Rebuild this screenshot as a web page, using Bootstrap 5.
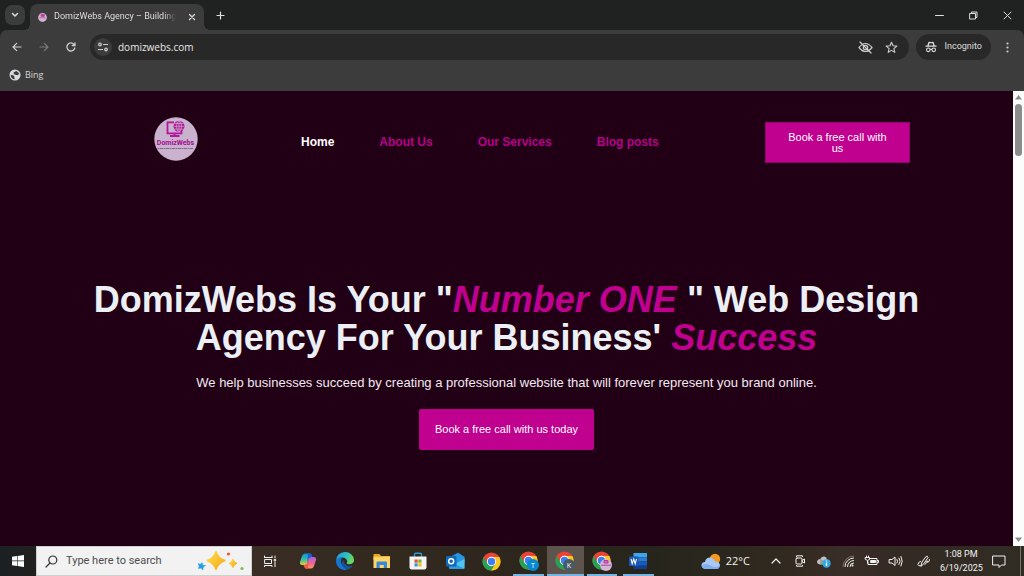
<!DOCTYPE html>
<html lang="en">
<head>
<meta charset="utf-8">
<meta name="viewport" content="width=device-width, initial-scale=1">
<title>DomizWebs Agency – Building</title>
<link rel="stylesheet" href="https://cdn.jsdelivr.net/npm/bootstrap@5.3.0/dist/css/bootstrap.min.css">
<style>
:root { --strip: #202222; --bar: #3c3c3c; --field: #282828; --plum: #210016; --pink: #c0008e; }
body { font-family: "Open Sans", "Noto Sans", sans-serif; background: var(--strip); color: #dedede; overflow: hidden; }
svg { display: block; flex: none; }
button { color: inherit; }
.plain-btn { border: 0; padding: 0; background: none; display: flex; align-items: center; justify-content: center; }
.stroke { fill: none; stroke: currentColor; stroke-linecap: round; stroke-linejoin: round; }

/* Browser frame */
.tab-strip { height: 30px; padding-left: 5px; }
.tab-search { width: 20px; height: 20px; border-radius: 7px; background: var(--bar); margin: 5px 5px 0 0; }
.browser-tab { position: relative; width: 174px; height: 26px; margin-top: 4px; padding: 0 8px; background: var(--bar); border-radius: 8px 8px 0 0; font-family: Roboto, sans-serif; font-size: 9px; }
.browser-tab::before, .browser-tab::after { content: ""; position: absolute; bottom: 0; width: 6px; height: 6px; }
.browser-tab::before { left: -6px; background: radial-gradient(circle at 0 0, transparent 6px, var(--bar) 6px); }
.browser-tab::after { right: -6px; background: radial-gradient(circle at 100% 0, transparent 6px, var(--bar) 6px); }
.tab-title { flex: 1; min-width: 0; overflow: hidden; white-space: nowrap; margin-left: 7px; -webkit-mask-image: linear-gradient(90deg, #000 90%, transparent); mask-image: linear-gradient(90deg, #000 90%, transparent); }
.window-controls .plain-btn { width: 34px; height: 30px; }
.tool-bar { height: 34px; background: var(--bar); border-radius: 7px 7px 0 0; padding: 0 3px; }
.tool-bar .plain-btn { color: #cfcfcf; }
.tool-bar .plain-btn.faded { color: #7b7b7b; }
.tool-bar .nav-btn { width: 27px; height: 26px; }
.omnibox { height: 26px; border-radius: 13px; background: var(--field); padding: 0 11px 0 4px; margin-left: 6px; }
.site-info { width: 18px; height: 18px; border-radius: 50%; background: var(--bar); }
.omnibox input { border: 0; outline: 0; background: none; color: #e8e8e8; font-size: 10px; padding: 0 0 0 6px; min-width: 0; }
.incognito { height: 26px; border-radius: 13px; background: var(--field); padding: 0 9px; margin: 0 3px 0 7px; font-family: Roboto, sans-serif; font-size: 9px; }
.bookmark-bar { height: 27px; background: var(--bar); padding: 0 9px 5px; font-size: 9px; }
.bookmark-bar a { color: #d5d5d5; }

/* Website */
.viewport { min-height: 0; background: var(--plum); font-family: "Liberation Sans", Arial, sans-serif; }
.site-wrap { max-width: 855px; }
.site-head { display: grid; grid-template-columns: 193px 1fr 145px; padding: 26px 24px 0 0; align-items: start; }
.site-links { gap: 45px; padding: 16px 0 0 29px; font-size: 12px; font-weight: 700; }
.site-links a { color: #b8008a; text-decoration: none; }
.site-links a.active { color: #fff; }
.cta { background: var(--pink); border: 0; color: #fff; text-decoration: none; text-align: center; font-size: 11px; line-height: 11px; }
.cta-head { padding: 9px 18px 8px; margin-top: 5px; border: 1px solid #960071; }
.cta-hero { padding: 15px 16px; border-radius: 2px; }
.hero { padding-top: 118px; text-align: center; }
.hero h1 { font-size: 36px; line-height: 38px; font-weight: 700; color: #eceff3; margin: 0 0 16px; }
.hero em { color: var(--pink); }
.hero p { font-size: 13px; line-height: 20px; color: #f2e9ef; margin: 0 0 16px; }
.scroll-rail { width: 11px; background: #fcfcfc; padding: 4px 0; }
.scroll-thumb { width: 7px; height: 52px; margin-top: 4px; border-radius: 4px; background: #8b8b8b; }

/* Taskbar */
.task-bar { height: 30px; background: linear-gradient(90deg, #1b2023 0, #20211f 3%, #3a2d25 25%, #33291f 36%, #2d261d 52%, #26251c 64%, #30291f 76%, #392d27 82%, #332a23 88%, #302c24 100%); color: #f3f3f3; }
.start-btn { width: 36px; height: 30px; }
.search-box { width: 216px; height: 30px; background: #f2f2f2; border: 1px solid #cfcfcf; padding: 0 6px 0 8px; color: #333; }
.search-box input { border: 0; outline: 0; background: none; font-family: Roboto, sans-serif; font-size: 11px; padding: 0 0 0 8px; min-width: 0; }
.search-box input::placeholder { color: #4c4c4c; opacity: 1; }
.task-view { width: 36px; height: 30px; margin-right: 2px; }
.task-apps { width: 367px; height: 30px; }
.task-apps .plain-btn { position: relative; flex: 1; }
.task-apps .running::after { content: ""; position: absolute; left: 3px; right: 3px; bottom: 0; height: 2px; background: #76b5e3; }
.task-apps .current { background: #5c544d; }
.task-apps .current::after { left: 0; right: 0; }
.weather { font-size: 11px; gap: 5px; }
.tray { gap: 8px; margin: 0 8px 0 18px; }
.clock { width: 42px; font-family: Roboto, sans-serif; font-size: 9px; line-height: 14px; text-align: center; white-space: nowrap; }
.notice { width: 34px; height: 30px; }
.show-desktop { width: 4px; height: 30px; border-left: 1px solid #77716b; }
</style>
</head>
<body class="d-flex flex-column vh-100">

<svg width="0" height="0" class="position-absolute" aria-hidden="true">
  <symbol id="chrome" viewBox="0 0 20 20">
    <circle cx="10" cy="10" r="9.5" fill="#e94435"/>
    <path d="M1.8 5.2A9.5 9.5 0 0 0 10 19.5L14.2 12.4 10 14.8 5.8 12.4Z" fill="#23a455"/>
    <path d="M10 5.2H18.2A9.5 9.5 0 0 1 9.6 19.5L14.2 12.4A4.8 4.8 0 0 0 10 5.2Z" fill="#fbc91b"/>
    <circle cx="10" cy="10" r="4.9" fill="#fff"/><circle cx="10" cy="10" r="3.9" fill="#3e7ff0"/>
  </symbol>
</svg>

<header>
  <div class="tab-strip d-flex align-items-start">
    <button class="plain-btn tab-search" aria-label="Search tabs"><svg class="stroke" width="8" height="6" viewBox="0 0 8 6" stroke-width="1.5"><path d="M1.5 1.5 4 4l2.500-2.500"/></svg></button>
    <div class="browser-tab d-flex align-items-center">
      <svg width="9" height="9" viewBox="0 0 9 9"><circle cx="4.500" cy="4.500" r="4.400" fill="#cfb5d0"/><path d="M3 1.300h3.300V3.500H3zM1.500 4.800h6" fill="#c02c9e" stroke="#c04ca6" stroke-width=".8"/></svg>
      <span class="tab-title">DomizWebs Agency – Building</span>
      <button class="plain-btn ms-2 ps-1" aria-label="Close tab"><svg class="stroke" width="8" height="8" viewBox="0 0 8 8" stroke-width="1.300"><path d="m1.500 1.500 5 5m0-5-5 5"/></svg></button>
    </div>
    <button class="plain-btn h-100 ms-2 px-1" aria-label="New tab"><svg class="stroke" width="9" height="9" viewBox="0 0 9 9" stroke-width="1.200"><path d="M4.500 1v7M1 4.500h7"/></svg></button>
    <div class="window-controls d-flex ms-auto">
      <button class="plain-btn" aria-label="Minimize"><svg class="stroke" width="9" height="9" viewBox="0 0 9 9"><path d="M.5 4.500h8"/></svg></button>
      <button class="plain-btn" aria-label="Restore"><svg class="stroke" width="9" height="9" viewBox="0 0 9 9"><path d="M1 2.500h5.500V8H1zM2.500 2.500V1H8v5.500H6.500"/></svg></button>
      <button class="plain-btn" aria-label="Close"><svg class="stroke" width="9" height="9" viewBox="0 0 9 9"><path d="m1 1 7 7m0-7L1 8"/></svg></button>
    </div>
  </div>

  <div class="tool-bar d-flex align-items-center">
    <button class="plain-btn nav-btn" aria-label="Back"><svg class="stroke" width="10" height="10" viewBox="0 0 10 10" stroke-width="1.200"><path d="M9 5H1m3.700-3.700L1 5l3.700 3.700"/></svg></button>
    <button class="plain-btn nav-btn faded" aria-label="Forward"><svg class="stroke" width="10" height="10" viewBox="0 0 10 10" stroke-width="1.200"><path d="M1 5h8M5.300 1.300 9 5 5.300 8.700"/></svg></button>
    <button class="plain-btn nav-btn" aria-label="Reload"><svg class="stroke" width="10" height="10" viewBox="0 0 10 10" stroke-width="1.300"><path d="M8.800 6A4 4 0 1 1 8 2.400L9 3.500M9 .8v2.700H6.300"/></svg></button>
    <div class="omnibox d-flex align-items-center flex-fill">
      <button class="plain-btn site-info" aria-label="Site information"><svg class="stroke" width="10" height="10" viewBox="0 0 10 10" stroke-width="1.200"><circle cx="2" cy="2.500" r="1.300"/><path d="M5.500 2.500h4M.5 7.500h4"/><circle cx="8" cy="7.500" r="1.300"/></svg></button>
      <input class="flex-fill" type="text" value="domizwebs.com" aria-label="Address">
      <button class="plain-btn me-2" aria-label="Third-party cookies blocked"><svg class="stroke" width="15" height="13" viewBox="0 0 15 13" stroke-width="1.200"><path d="M1 6.500Q7.500-1.500 14 6.500 7.500 14.500 1 6.500Z"/><circle cx="7.500" cy="6.500" r="2.200"/><path d="m2 1 11 11"/></svg></button>
      <button class="plain-btn ms-1" aria-label="Bookmark this tab"><svg class="stroke" width="13" height="13" viewBox="0 0 13 13" stroke-width="1.100"><path d="m6.500 1.200 1.500 3.600 3.900.3-3 2.500.9 3.800-3.300-2-3.300 2 .9-3.800-3-2.500 3.900-.3z"/></svg></button>
    </div>
    <button class="incognito border-0 d-flex align-items-center" type="button">
      <svg width="12" height="12" viewBox="0 0 12 12" fill="currentColor"><path d="M3.300 1.200Q3.600.5 4.500.8L6 1.200 7.500.8Q8.400.5 8.700 1.200L9.600 4.600H11.500V5.800H.5V4.600H2.400Z"/><path d="M4.300 2.200h3.400l.5 2.200H3.800z" fill="#282828"/><g fill="none" stroke="currentColor" stroke-width="1.100"><circle cx="3.300" cy="8.800" r="1.800"/><circle cx="8.700" cy="8.800" r="1.800"/><path d="M5.100 8.500q.9-.6 1.800 0"/></g></svg>
      <span class="ms-1 ps-1">Incognito</span>
    </button>
    <button class="plain-btn nav-btn" aria-label="Menu"><svg width="3" height="11" viewBox="0 0 3 11" fill="currentColor"><circle cx="1.500" cy="1.500" r="1.100"/><circle cx="1.500" cy="5.500" r="1.100"/><circle cx="1.500" cy="9.500" r="1.100"/></svg></button>
  </div>

  <nav class="bookmark-bar d-flex align-items-center">
    <a href="#" class="d-flex align-items-center text-decoration-none"><svg width="12" height="12" viewBox="0 0 12 12"><circle cx="6" cy="6" r="5.500" fill="#d8dadd"/><path d="M1.700 5.700 4 6.200Q5.600 6.800 5.200 8L6 10.200Q1.800 10 1.700 5.700ZM4.700 3.300 7.300 1.900Q9.600 2.600 10.200 5L8.300 6.300 6.700 5.700 4.800 5.200Z" fill="#3c3c3c"/></svg><span class="ms-1">Bing</span></a>
  </nav>
</header>

<div class="viewport d-flex flex-fill">
  <main class="flex-fill">
    <div class="site-wrap mx-auto">
      <div class="site-head">
        <a href="#" class="d-flex justify-content-center" aria-label="DomizWebs home">
          <svg width="44" height="44" viewBox="0 0 44 44">
            <circle cx="22" cy="22" r="21.700" fill="#c8b2cd"/>
            <g fill="none" stroke="#b4149a"><path d="M20 5.300H13.500V16.300H27.500V13.500" stroke-width="1.800"/><path d="M20.500 16.500V19M16 19h9.500" stroke-width="1.800"/></g>
            <circle cx="25" cy="9.300" r="5.500" fill="#b4149a"/>
            <g fill="none" stroke="#c8b2cd" stroke-width=".7"><ellipse cx="25" cy="9.300" rx="2.400" ry="5.500"/><path d="M25 3.500v11.500M19.500 9.300h11M20.500 6.500h9M20.500 12.100h9"/></g>
            <text x="21.500" y="27.500" text-anchor="middle" font-size="7" font-weight="700" font-family="Roboto, sans-serif" fill="#a60a91">DomizWebs</text>
            <path d="M3.500 31.500H39" stroke="#87668e" stroke-dasharray="2 .5 3 .5" stroke-width="1.200"/>
          </svg>
        </a>
        <nav class="site-links d-flex" aria-label="Main">
          <a href="#" class="active">Home</a><a href="#">About Us</a><a href="#">Our Services</a><a href="#">Blog posts</a>
        </nav>
        <a href="#" class="cta cta-head">Book a free call with us</a>
      </div>
      <section class="hero">
        <h1>DomizWebs Is Your "<em>Number ONE </em>" Web Design Agency For Your Business' <em>Success</em></h1>
        <p>We help businesses succeed by creating a professional website that will forever represent you brand online.</p>
        <a href="#" class="cta cta-hero d-inline-block">Book a free call with us today</a>
      </section>
    </div>
  </main>
  <div class="scroll-rail d-flex flex-column align-items-center" aria-hidden="true">
    <svg width="7" height="5" viewBox="0 0 7 5" fill="#8b8b8b"><path d="M3.500 0 7 4.500H0z"/></svg>
    <div class="scroll-thumb"></div>
    <svg class="mt-auto" width="7" height="5" viewBox="0 0 7 5" fill="#8b8b8b"><path d="M0 .5h7L3.500 5z"/></svg>
  </div>
</div>

<footer class="task-bar d-flex align-items-center">
  <button class="plain-btn start-btn" aria-label="Start"><svg width="12" height="12" viewBox="0 0 12 12" fill="#fff"><path d="M0 1.700 5 1v4.600H0zM5.600.9 12 0v5.600H5.600zM0 6.300h5v4.700l-5-.7zM5.600 6.300H12V12l-6.400-.9z"/></svg></button>
  <div class="search-box d-flex align-items-center">
    <svg class="stroke" width="13" height="13" viewBox="0 0 13 13" stroke-width="1.200"><circle cx="7.800" cy="5" r="4"/><path d="M5 8 1 12"/></svg>
    <input class="flex-fill" type="text" placeholder="Type here to search" aria-label="Search">
    <svg width="48" height="22" viewBox="0 0 48 22">
      <defs><linearGradient id="gold" x1="0" y1="0" x2="1" y2="1"><stop stop-color="#ffdc4d"/><stop offset="1" stop-color="#f6aa16"/></linearGradient></defs>
      <path d="M19 2q2 6.500 8.500 8.500-6.500 2-8.500 8.500-2-6.500-8.500-8.500Q17 8.500 19 2Z" fill="url(#gold)" stroke="url(#gold)" stroke-width="2" stroke-linejoin="round"/>
      <path d="M36 9q1 3.300 4 4.300-3 1-4 4.300-1-3.300-4-4.300 3-1 4-4.300Z" fill="url(#gold)" stroke="url(#gold)" stroke-linejoin="round"/>
      <path d="m5 12.500.8 2.700 2.700.3-2.300 1.700-.3 2.700L4 18l-2.700.5 1-2.500-1.300-2.300 2.700.5z" fill="#239fdf" stroke="#239fdf" stroke-width=".5"/>
      <circle cx="31.500" cy="4" r="1.600" fill="#e95935"/><circle cx="45" cy="18.500" r="1.600" fill="#79bd50"/>
    </svg>
  </div>
  <button class="plain-btn task-view" aria-label="Task view"><svg class="stroke" width="13" height="12" viewBox="0 0 13 12"><path d="M.5 2.500V1M8 2.500V1M.5 2.500H8M1 4.500h6.500v4H1zM.5 12v-1.500H8V12M11 1v2M11 7v5M10.500 4.500h1.200v1.300h-1.200z"/></svg></button>
  <div class="task-apps d-flex">
    <button class="plain-btn" aria-label="Copilot"><svg width="18" height="18" viewBox="0 0 18 18">
      <defs><linearGradient id="cop1" x1="0" y1="0" x2="0" y2="1"><stop stop-color="#168be8"/><stop offset=".55" stop-color="#39c49e"/><stop offset="1" stop-color="#f1c72c"/></linearGradient><linearGradient id="cop2" x1="0" y1="0" x2="0" y2="1"><stop stop-color="#a460e8"/><stop offset=".55" stop-color="#f06491"/><stop offset="1" stop-color="#ff9a5c"/></linearGradient></defs>
      <path d="M6 1.500h5.500L9 10.500Q8 13 6 13H3Q.5 13 1 10L3 4Q4 1.500 6 1.500Z" fill="url(#cop1)"/>
      <path d="M12 16.500H6.500L9 7.500Q10 5 12 5h3q2.500 0 2 3l-2 6q-1 2.500-3 2.500Z" fill="url(#cop2)"/>
      <path d="M9 1.500h2q1.500 0 2 2l.5 1.500H12Q10 5 9 7.500L8 11Z" fill="#1764cf"/><path d="M9 16.500H7q-1.500 0-2-2L4.500 13H6q2 0 3-2.500L10 7Z" fill="#f25b4c"/>
    </svg></button>
    <button class="plain-btn" aria-label="Edge"><svg width="18" height="18" viewBox="0 0 18 18">
      <defs><linearGradient id="edg" x1="0" y1="0" x2="1" y2=".3"><stop stop-color="#2694dc"/><stop offset=".6" stop-color="#2bbfc7"/><stop offset="1" stop-color="#67d95b"/></linearGradient></defs>
      <path d="M0 9Q.5.300 9 0q8 .3 9 8 0 4-4.500 4.200-2.500 0-3-1 1.500-1.300.4-3.200Q8.500 4.500 4 6 .5 7.500 0 9Z" fill="url(#edg)"/>
      <path d="M0 9Q1.500 4.800 6.500 5.200 4.500 7 5 10.500q1.500 5 6.500 7Q8.500 18.500 5.500 17.300.3 15 0 9Z" fill="#1277d4"/>
      <path d="M7.200 8Q4 12 8 15.800q4.500 2.400 9-2.300-2.500 1-5 .4Q7.500 12.500 7.200 8ZM8 15.800 11.500 17.500Q15 16.500 17 13.500Z" fill="#1255a0"/>
    </svg></button>
    <button class="plain-btn" aria-label="File Explorer"><svg width="18" height="16" viewBox="0 0 18 16"><path d="M.5 1h6l1.500 2H17v4H.5z" fill="#e9a61f"/><path d="M.5 3.700H17V15H.5z" fill="#ffd568"/><path d="M3.500 15V9.500q0-1 1-1h8.500q1 0 1 1V15h-3.200v-3H6.700v3z" fill="#378bd6"/></svg></button>
    <button class="plain-btn" aria-label="Microsoft Store"><svg width="18" height="18" viewBox="0 0 18 18"><path d="M5.500 5V2.500q0-1.300 1.300-1.300h4.400q1.300 0 1.300 1.300V5" fill="none" stroke="#2e97d5" stroke-width="1.400"/><path d="M.5 4.500h17v11q0 2-2 2h-13q-2 0-2-2z" fill="#f4f4f4"/><path d="M5.500 7.500H8.700v3.200H5.500z" fill="#e95131"/><path d="M9.300 7.500h3.200v3.200H9.300z" fill="#75b82d"/><path d="M5.500 11.300h3.200v3.200H5.500z" fill="#289bd9"/><path d="M9.300 11.300h3.200v3.200H9.300z" fill="#f5b820"/></svg></button>
    <button class="plain-btn" aria-label="Outlook"><svg width="19" height="18" viewBox="0 0 19 18"><path d="M3 5 12 .8 18.500 5v11.500H3z" fill="#1a70c7"/><path d="m7 4 5-3.200L18.500 5v6L12 13z" fill="#2795df"/><path d="M3 15 18.500 7v8.500q0 1.500-1.500 1.500H5q-2 0-2-2Z" fill="#51c5ee"/><path d="m3 9 15 7.500q-.5.500-1.500.5H5q-2 0-2-2z" fill="#2b9de0"/><rect x="0" y="4" width="10.500" height="10.500" rx="1.200" fill="#1169bd"/><circle cx="5.200" cy="9.200" r="2.500" fill="none" stroke="#fff" stroke-width="1.400"/></svg></button>
    <button class="plain-btn" aria-label="Chrome"><svg width="19" height="19"><use href="#chrome"/></svg></button>
    <button class="plain-btn running" aria-label="Chrome, profile T"><svg width="20" height="20" viewBox="0 0 20 20"><use href="#chrome" width="19" height="19"/><circle cx="14" cy="14" r="6" fill="#0788d1"/><text x="14" y="16.500" font-size="7" text-anchor="middle" fill="#fff">T</text></svg></button>
    <button class="plain-btn running current" aria-label="Chrome, profile K"><svg width="20" height="20" viewBox="0 0 20 20"><use href="#chrome" width="19" height="19"/><circle cx="14" cy="14" r="6" fill="#465b66"/><text x="14" y="16.500" font-size="7" text-anchor="middle" fill="#fff">K</text></svg></button>
    <button class="plain-btn running" aria-label="Chrome, DomizWebs profile"><svg width="20" height="20" viewBox="0 0 20 20"><use href="#chrome" width="19" height="19"/><circle cx="14" cy="14" r="6" fill="#d2b8d4"/><path d="M12 9.500h4V12h-4zM9 14.200h10" fill="#c56dbc" stroke="#b43aa5"/></svg></button>
    <button class="plain-btn running" aria-label="Word"><svg width="19" height="17" viewBox="0 0 19 17"><path d="M4.500 0H18v4.300H4.500z" fill="#41a5ee"/><path d="M4.500 4.300H18v4.200H4.500z" fill="#2b7cd3"/><path d="M4.500 8.500H18v4.200H4.500z" fill="#185abd"/><path d="M4.500 12.700H18V16H4.500z" fill="#103f91"/><rect y="3.500" width="9.500" height="9.500" rx="1" fill="#1957b5"/><path d="m2 5.800 1.200 5L4.700 6l1.500 4.800 1.300-5" fill="none" stroke="#fff" stroke-width="1.100"/></svg></button>
  </div>
  <div class="weather d-flex align-items-center ms-auto">
    <svg width="20" height="17" viewBox="0 0 20 17"><circle cx="14" cy="6" r="5.200" fill="#f59a1c"/><path d="M4.500 16Q.5 15.500.5 12.300.8 9 4 9q.7-4.500 5-4.500Q13 4.800 13.800 8.500 18.500 8 19 12.300 18.500 16 15 16Z" fill="#a9c8f6"/><path d="M.6 12.500Q5 9.500 9.500 12.500t9.500 0Q18.500 16 15 16H4.500Q1 15.500.6 12.500Z" fill="#80adf0"/></svg>
    <span>22°C</span>
  </div>
  <div class="tray d-flex align-items-center">
    <button class="plain-btn" aria-label="Hidden icons"><svg class="stroke" width="16" height="16" viewBox="0 0 16 16" stroke-width="1.200"><path d="m4 10 4-4 4 4"/></svg></button>
    <button class="plain-btn" aria-label="Meet now"><svg class="stroke" width="16" height="16" viewBox="0 0 16 16"><rect x="4" y="5" width="6" height="6" rx="1"/><path d="m10 7.500 2.500-1.500v4L10 8.500M4.500 3.500V2.800h6v.7M4.500 12.500v.7h6v-.7"/></svg></button>
    <button class="plain-btn" aria-label="OneDrive"><svg width="16" height="16" viewBox="0 0 16 16"><path d="M4 11.500Q.5 11 1.200 8 2 6 4.200 6 5.500 3 8.500 3.500q2 .5 2.500 3 3 0 3 3l-1 2z" fill="#c1c1bd"/><path d="m4.200 6 5 2.800-5 2.700" fill="#989995"/><circle cx="10.500" cy="10.500" r="4.200" fill="#31a8e4"/><path d="M10.500 9.500V13M10.500 7.500v1" stroke="#fff" stroke-width="1.300"/></svg></button>
    <button class="plain-btn" aria-label="Network"><svg class="stroke" width="16" height="16" viewBox="0 0 16 16"><path d="M5 13.500A8.500 8.500 0 0 1 13.500 5M7.500 13.500a6 6 0 0 1 6-6M10 13.500a3.500 3.500 0 0 1 3.500-3.500"/><path d="M3 13.500A10.500 10.500 0 0 1 13.500 3" opacity=".35"/><circle cx="12.500" cy="12.500" r="1" fill="currentColor" stroke="none"/></svg></button>
    <button class="plain-btn" aria-label="Battery"><svg class="stroke" width="16" height="16" viewBox="0 0 16 16"><path d="M6 5.500h7v6H4V9M13.500 7.500h1v2h-1"/><path d="M7 7.500h4.500v2H7z" fill="currentColor"/><path d="M1.500 4.500h4v2q-2 2-4 0zM2.500 4.500V3M4.500 4.500V3M3.500 8v2"/></svg></button>
    <button class="plain-btn" aria-label="Volume"><svg class="stroke" width="16" height="16" viewBox="0 0 16 16"><path d="M1.500 6.500H4L7 4v8.500L4 10H1.500zM9 6.500q1.300 1.700 0 3.500M11 5q2.500 3.200 0 6.500M13 3.500q2.500 4.700 0 9.500"/></svg></button>
    <button class="plain-btn ms-1" aria-label="Pen workspace"><svg class="stroke" width="16" height="16" viewBox="0 0 16 16"><path d="M5 13 6 9 10 3.500Q11.500 2.500 12 4.500L8 10.500ZM4.500 8.500Q2 9 2 11.500q.5 2 2.500 1.300M9 11.500Q10.500 10 10.500 8.500 12 7 11.800 9.500 14 8 13.500 6.500"/></svg></button>
  </div>
  <div class="clock">1:08 PM<br>6/19/2025</div>
  <button class="plain-btn notice" aria-label="Notifications"><svg class="stroke" width="14" height="13" viewBox="0 0 14 13"><path d="M1 1h12v9H9.500L7 12.500V10H1z"/></svg></button>
  <div class="show-desktop ms-1"></div>
</footer>
<script src="https://cdn.jsdelivr.net/npm/bootstrap@5.3.0/dist/js/bootstrap.bundle.min.js"></script>
</body>
</html>
